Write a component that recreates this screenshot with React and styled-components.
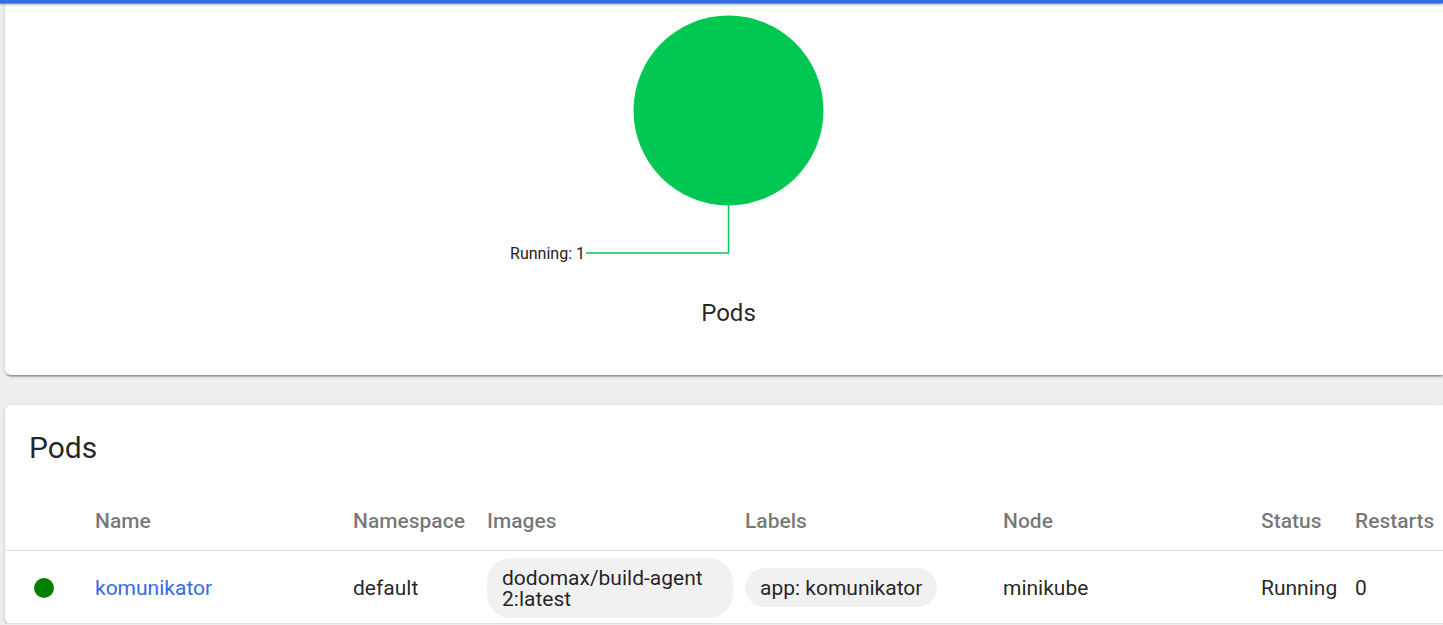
import React from "react";
import styled, { createGlobalStyle } from "styled-components";

const GlobalStyle = createGlobalStyle`
  * { box-sizing: border-box; }
  body {
    margin: 0;
    background: #eeeff1;
    color: rgba(0, 0, 0, 0.87);
    font-family: Roboto, "Liberation Sans", sans-serif;
    font-size: 21px;
    overflow: hidden;
  }
`;

const TopBar = styled.header`
  height: 3px;
  background: #326de6;
  box-shadow: 0 1px 3px rgba(0, 0, 0, 0.5), 0 1px 1px rgba(0, 0, 0, 0.2);
  position: relative;
`;

const Page = styled.main`
  display: flex;
  flex-direction: column;
  gap: 30px;
  padding-left: 5px;
`;

const Card = styled.section`
  background: #fff;
  border-radius: ${(p) => (p.$joined ? "0 0 0 6px" : "6px 0 0 6px")};
  box-shadow: 0 3px 1px -1px rgba(0, 0, 0, 0.2), 0 1px 1px rgba(0, 0, 0, 0.14),
    0 1px 4px rgba(0, 0, 0, 0.14);
`;

const Chart = styled.figure`
  display: flex;
  flex-direction: column;
  align-items: center;
  margin: 0;
  padding: 12px 0 48px 9px;
`;

const Pie = styled.svg`
  display: block;
  width: 441px;
  height: 252px;
  font-size: 16px;
`;

const Caption = styled.figcaption`
  margin-top: 32px;
  font-size: 24px;
  line-height: 28px;
`;

const Title = styled.h2`
  margin: 0;
  padding: 24px;
  font-size: 30px;
  font-weight: 400;
  line-height: 38px;
`;

const Table = styled.table`
  width: 100%;
  border-collapse: separate;
  border-spacing: 0;
  table-layout: fixed;
`;

const Col = styled.col`
  width: ${(p) => p.$width};
`;

const HeadCell = styled.th`
  height: 60px;
  padding: 0;
  border-bottom: 1px solid #e0e0e0;
  color: rgba(0, 0, 0, 0.54);
  font-size: 21px;
  font-weight: 500;
  text-align: left;
  white-space: nowrap;
`;

const Cell = styled.td`
  height: 73px;
  padding: 1px 0 0;
  border-bottom: 1px solid #e0e0e0;
  white-space: nowrap;
`;

const Dot = styled.svg`
  display: block;
  width: 20px;
  height: 20px;
  margin-left: 29px;
`;

const Link = styled.a`
  color: #326de6;
  text-decoration: none;
`;

const Chip = styled.span`
  display: block;
  width: fit-content;
  max-width: 246px;
  padding: 10px 15px 8px;
  border-radius: 24px;
  background: #f1f1f1;
  line-height: 21px;
  white-space: normal;
  overflow-wrap: anywhere;
`;

const columns = [
  { label: "", width: "90px" },
  { label: "Name", width: "18%" },
  { label: "Namespace", width: "134px" },
  { label: "Images", width: "18%" },
  { label: "Labels", width: "18%" },
  { label: "Node", width: "18%" },
  { label: "Status", width: "94px" },
  { label: "Restarts", width: "88px" },
];

export default function App() {
  return (
    <>
      <GlobalStyle />
      <TopBar />
      <Page>
        <Card $joined>
          <Chart>
            <Pie viewBox="0 0 441 252" role="img" aria-label="Running: 1">
              <circle cx="220.5" cy="95.5" r="95" fill="#00c752" />
              <path d="M220.5 190V238H78" fill="none" stroke="#00c752" strokeWidth="1.5" />
              <text x="77" y="244" textAnchor="end" fill="#212121">Running: 1</text>
            </Pie>
            <Caption>Pods</Caption>
          </Chart>
        </Card>
        <Card>
          <Title>Pods</Title>
          <Table>
            <colgroup>
              {columns.map((c) => <Col key={c.label} $width={c.width} />)}
            </colgroup>
            <thead>
              <tr>
                {columns.map((c) => <HeadCell key={c.label} scope="col">{c.label}</HeadCell>)}
              </tr>
            </thead>
            <tbody>
              <tr>
                <Cell>
                  <Dot viewBox="0 0 20 20" role="img" aria-label="Healthy">
                    <circle cx="10" cy="10" r="10" fill="#008000" />
                  </Dot>
                </Cell>
                <Cell><Link href="#komunikator">komunikator</Link></Cell>
                <Cell>default</Cell>
                <Cell><Chip>dodomax/build-agent 2:latest</Chip></Cell>
                <Cell><Chip>app: komunikator</Chip></Cell>
                <Cell>minikube</Cell>
                <Cell>Running</Cell>
                <Cell>0</Cell>
              </tr>
            </tbody>
          </Table>
        </Card>
      </Page>
    </>
  );
}
